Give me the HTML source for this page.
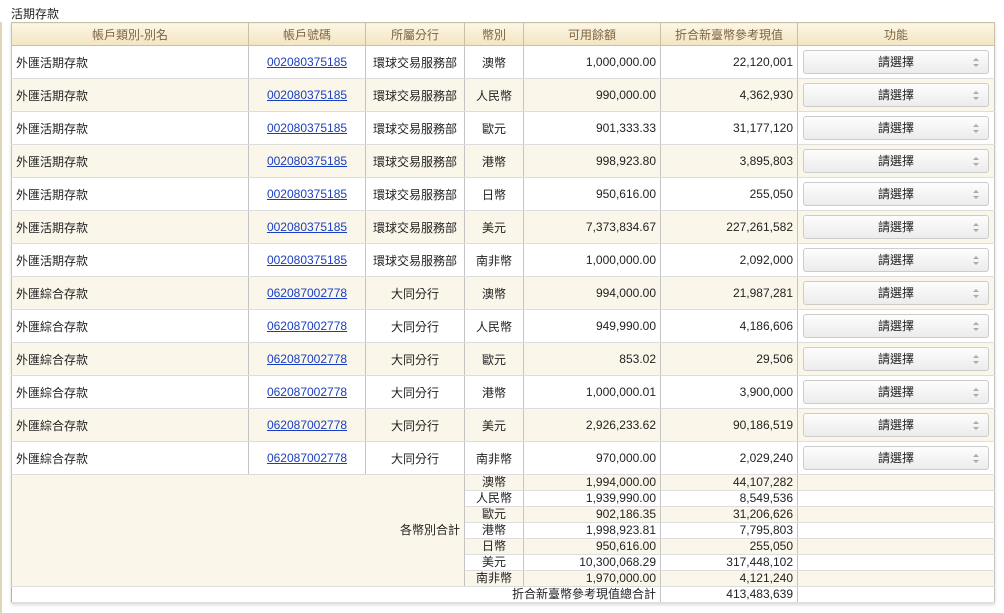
<!DOCTYPE html>
<html><head><meta charset="utf-8"><style>
body{margin:0;width:1004px;height:613px;background:#fff;font-family:"Liberation Sans","Noto Sans CJK TC",sans-serif;font-size:12px;color:#222;position:relative;overflow:hidden}
.strip{position:absolute;left:0;top:22px;width:2px;height:591px;background:#ddd6b8}
.title{position:absolute;left:11px;top:7px;font-size:12px;line-height:14px}
table{position:absolute;left:11px;top:22px;border-collapse:collapse;table-layout:fixed;width:983px;border:1px solid #b3b3b3;box-shadow:0 2px 3px rgba(0,0,0,.15)}
td,th{border-left:1px solid #c4c4c4;border-right:1px solid #c4c4c4;border-top:1px solid #ddd;border-bottom:1px solid #ddd;padding:0 4px;white-space:nowrap;overflow:hidden}
th{height:22px;font-weight:normal;color:#7d6440;background:linear-gradient(#fcf6e6,#f3e5c2);border-color:#c9c0a8;font-size:12px}
tr.r td{height:32px}
tr.s td{height:15px;line-height:15px}
tr.b td{background:#faf6ea}
.c{text-align:center}.rt{text-align:right}
a{color:#1a3ec0;text-decoration:underline}
.btn{height:22px;margin:0 1px;border:1px solid #ccc;border-radius:3px;background:linear-gradient(#fdfdfd,#ececec);text-align:center;line-height:22px;position:relative;color:#222}
.btn:after{content:"";position:absolute;right:9px;top:7px;width:0;height:0;border-left:3px solid transparent;border-right:3px solid transparent;border-bottom:3px solid #aaa}
.btn:before{content:"";position:absolute;right:9px;top:13px;width:0;height:0;border-left:3px solid transparent;border-right:3px solid transparent;border-top:3px solid #aaa}
.lab{background:#faf6ea!important}
</style></head><body>
<div class="strip"></div>
<div class="title">活期存款</div>
<table>
<colgroup><col style="width:237px"><col style="width:117px"><col style="width:99px"><col style="width:59px"><col style="width:137px"><col style="width:137px"><col style="width:197px"></colgroup>
<tr><th>帳戶類別-別名</th><th>帳戶號碼</th><th>所屬分行</th><th>幣別</th><th>可用餘額</th><th>折合新臺幣參考現值</th><th>功能</th></tr>
<tr class="r"><td>外匯活期存款</td><td class="c"><a>002080375185</a></td><td class="c">環球交易服務部</td><td class="c">澳幣</td><td class="rt">1,000,000.00</td><td class="rt">22,120,001</td><td><div class="btn">請選擇</div></td></tr>
<tr class="r b"><td>外匯活期存款</td><td class="c"><a>002080375185</a></td><td class="c">環球交易服務部</td><td class="c">人民幣</td><td class="rt">990,000.00</td><td class="rt">4,362,930</td><td><div class="btn">請選擇</div></td></tr>
<tr class="r"><td>外匯活期存款</td><td class="c"><a>002080375185</a></td><td class="c">環球交易服務部</td><td class="c">歐元</td><td class="rt">901,333.33</td><td class="rt">31,177,120</td><td><div class="btn">請選擇</div></td></tr>
<tr class="r b"><td>外匯活期存款</td><td class="c"><a>002080375185</a></td><td class="c">環球交易服務部</td><td class="c">港幣</td><td class="rt">998,923.80</td><td class="rt">3,895,803</td><td><div class="btn">請選擇</div></td></tr>
<tr class="r"><td>外匯活期存款</td><td class="c"><a>002080375185</a></td><td class="c">環球交易服務部</td><td class="c">日幣</td><td class="rt">950,616.00</td><td class="rt">255,050</td><td><div class="btn">請選擇</div></td></tr>
<tr class="r b"><td>外匯活期存款</td><td class="c"><a>002080375185</a></td><td class="c">環球交易服務部</td><td class="c">美元</td><td class="rt">7,373,834.67</td><td class="rt">227,261,582</td><td><div class="btn">請選擇</div></td></tr>
<tr class="r"><td>外匯活期存款</td><td class="c"><a>002080375185</a></td><td class="c">環球交易服務部</td><td class="c">南非幣</td><td class="rt">1,000,000.00</td><td class="rt">2,092,000</td><td><div class="btn">請選擇</div></td></tr>
<tr class="r b"><td>外匯綜合存款</td><td class="c"><a>062087002778</a></td><td class="c">大同分行</td><td class="c">澳幣</td><td class="rt">994,000.00</td><td class="rt">21,987,281</td><td><div class="btn">請選擇</div></td></tr>
<tr class="r"><td>外匯綜合存款</td><td class="c"><a>062087002778</a></td><td class="c">大同分行</td><td class="c">人民幣</td><td class="rt">949,990.00</td><td class="rt">4,186,606</td><td><div class="btn">請選擇</div></td></tr>
<tr class="r b"><td>外匯綜合存款</td><td class="c"><a>062087002778</a></td><td class="c">大同分行</td><td class="c">歐元</td><td class="rt">853.02</td><td class="rt">29,506</td><td><div class="btn">請選擇</div></td></tr>
<tr class="r"><td>外匯綜合存款</td><td class="c"><a>062087002778</a></td><td class="c">大同分行</td><td class="c">港幣</td><td class="rt">1,000,000.01</td><td class="rt">3,900,000</td><td><div class="btn">請選擇</div></td></tr>
<tr class="r b"><td>外匯綜合存款</td><td class="c"><a>062087002778</a></td><td class="c">大同分行</td><td class="c">美元</td><td class="rt">2,926,233.62</td><td class="rt">90,186,519</td><td><div class="btn">請選擇</div></td></tr>
<tr class="r"><td>外匯綜合存款</td><td class="c"><a>062087002778</a></td><td class="c">大同分行</td><td class="c">南非幣</td><td class="rt">970,000.00</td><td class="rt">2,029,240</td><td><div class="btn">請選擇</div></td></tr>
<tr class="s b"><td colspan="3" rowspan="7" class="rt lab">各幣別合計</td><td class="c">澳幣</td><td class="rt">1,994,000.00</td><td class="rt">44,107,282</td><td></td></tr>
<tr class="s"><td class="c">人民幣</td><td class="rt">1,939,990.00</td><td class="rt">8,549,536</td><td></td></tr>
<tr class="s b"><td class="c">歐元</td><td class="rt">902,186.35</td><td class="rt">31,206,626</td><td></td></tr>
<tr class="s"><td class="c">港幣</td><td class="rt">1,998,923.81</td><td class="rt">7,795,803</td><td></td></tr>
<tr class="s b"><td class="c">日幣</td><td class="rt">950,616.00</td><td class="rt">255,050</td><td></td></tr>
<tr class="s"><td class="c">美元</td><td class="rt">10,300,068.29</td><td class="rt">317,448,102</td><td></td></tr>
<tr class="s b"><td class="c">南非幣</td><td class="rt">1,970,000.00</td><td class="rt">4,121,240</td><td></td></tr>
<tr class="s"><td colspan="5" class="rt" style="border-left:none">折合新臺幣參考現值總合計</td><td class="rt">413,483,639</td><td></td></tr>
</table>
</body></html>
